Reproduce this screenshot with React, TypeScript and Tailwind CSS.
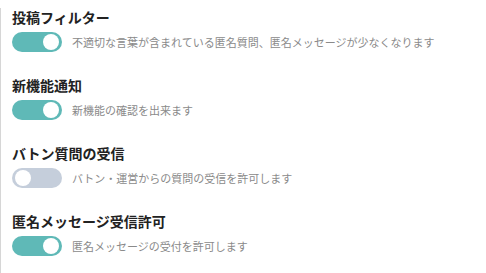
import { useState } from "react";

type Setting = {
  id: string;
  title: string;
  description: string;
  enabled: boolean;
};

const SETTINGS: Setting[] = [
  {
    id: "filter",
    title: "投稿フィルター",
    description: "不適切な言葉が含まれている匿名質問、匿名メッセージが少なくなります",
    enabled: true,
  },
  {
    id: "news",
    title: "新機能通知",
    description: "新機能の確認を出来ます",
    enabled: true,
  },
  {
    id: "baton",
    title: "バトン質問の受信",
    description: "バトン・運営からの質問の受信を許可します",
    enabled: false,
  },
  {
    id: "anonymous",
    title: "匿名メッセージ受信許可",
    description: "匿名メッセージの受付を許可します",
    enabled: true,
  },
];

function Toggle({ on, onChange }: { on: boolean; onChange: () => void }) {
  return (
    <button
      type="button"
      role="switch"
      aria-checked={on}
      onClick={onChange}
      className={
        "relative h-[20px] w-[50px] shrink-0 rounded-full transition-colors " +
        (on ? "bg-[#5fb9b7]" : "bg-[#c5cedb]")
      }
    >
      <span
        className={
          "absolute top-[2px] h-[16px] w-[16px] rounded-full bg-white transition-all " +
          (on ? "left-[31px]" : "left-[3px]")
        }
      />
    </button>
  );
}

export default function App() {
  const [values, setValues] = useState<Record<string, boolean>>(() =>
    Object.fromEntries(SETTINGS.map((s) => [s.id, s.enabled]))
  );

  return (
    <div
      className="h-[273px] w-[486px] overflow-hidden bg-white pt-[8px]"
      style={{ fontFamily: '"Noto Sans CJK JP", "Noto Sans", sans-serif' }}
    >
      <div className="flex h-full flex-col gap-[24px] border-l border-[#d6d6d6] pl-[11px]">
        {SETTINGS.map((setting) => (
          <div key={setting.id} className="flex flex-col gap-[6px]">
            <p className="text-[14px] font-bold leading-[18px] text-[#222]">{setting.title}</p>
            <div className="flex items-center gap-[10px]">
              <Toggle
                on={values[setting.id]}
                onChange={() => setValues((prev) => ({ ...prev, [setting.id]: !prev[setting.id] }))}
              />
              <span className="text-[11px] leading-[16px] text-[#8a8a8a]">{setting.description}</span>
            </div>
          </div>
        ))}
      </div>
    </div>
  );
}
